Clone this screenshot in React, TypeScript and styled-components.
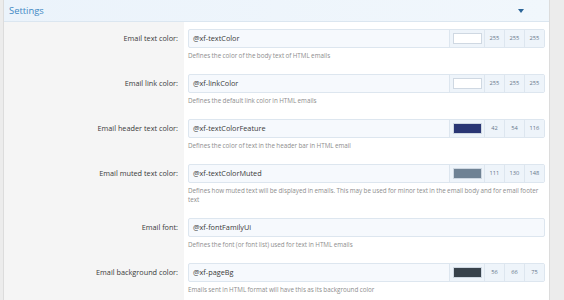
import * as React from "react";
import styled, { createGlobalStyle } from "styled-components";

const GlobalStyle = createGlobalStyle`
  html, body {
    margin: 0;
    padding: 0;
    background: #ececec;
    font-family: "Open Sans", "Noto Sans", sans-serif;
  }
`;

const Page = styled.div`
  padding: 0 14px 0 3px;
  height: 300px;
  overflow: hidden;
`;

const Block = styled.div`
  background: #fff;
  border: 1px solid #dcdcdc;
  border-top: none;
  border-bottom: none;
  padding-bottom: 20px;
`;

const Header = styled.div`
  display: flex;
  align-items: center;
  justify-content: space-between;
  height: 21px;
  padding: 0 25px 0 5px;
  background: linear-gradient(to right, #ebf3fb, #f1f7fc);
  border-bottom: 1px solid #dbe6f0;
  color: #4289c4;
  font-size: 9.4px;
`;

const Caret = styled.span`
  width: 0;
  height: 0;
  border-left: 3px solid transparent;
  border-right: 3px solid transparent;
  border-top: 4px solid #2c6598;
`;

const Row = styled.div`
  display: grid;
  grid-template-columns: 180px 1fr;
`;

const Label = styled.div`
  background: #f5f5f5;
  padding: 7px 6px 7px 0;
  text-align: right;
  font-size: 7.3px;
  line-height: 19px;
  color: #3a3a3a;
`;

const Field = styled.div`
  padding: 7px 4px 7px 4px;
`;

const InputBox = styled.div`
  display: flex;
  align-items: stretch;
  height: 17px;
  border: 1px solid #dde6ef;
  border-radius: 2px;
  background: #f6f9fd;
`;

const InputText = styled.div`
  flex: 1;
  padding-left: 4px;
  font-size: 7.3px;
  line-height: 17px;
  color: #3a3a3a;
`;

const Swatch = styled.div`
  display: flex;
  align-items: stretch;
  border-left: 1px solid #dde6ef;
  background: #eef4fa;
`;

const ColorBox = styled.div<{ $c: string }>`
  width: 27px;
  height: 9px;
  margin: 3px 2px 0 3px;
  border: 1px solid #cfd8e2;
  background: ${(p) => p.$c};
`;

const Num = styled.div`
  width: 19px;
  border-left: 1px solid #dde6ef;
  text-align: center;
  font-size: 5.7px;
  line-height: 17px;
  color: #66768a;
`;

const Explain = styled.div`
  margin-top: 3px;
  font-size: 6.3px;
  word-spacing: -0.3px;
  line-height: 9px;
  color: #8e8e8e;
`;

type Setting = {
  label: string;
  value: string;
  explain: string;
  rgb?: [number, number, number];
};

const settings: Setting[] = [
  {
    label: "Email text color:",
    value: "@xf-textColor",
    explain: "Defines the color of the body text of HTML emails",
    rgb: [255, 255, 255],
  },
  {
    label: "Email link color:",
    value: "@xf-linkColor",
    explain: "Defines the default link color in HTML emails",
    rgb: [255, 255, 255],
  },
  {
    label: "Email header text color:",
    value: "@xf-textColorFeature",
    explain: "Defines the color of text in the header bar in HTML email",
    rgb: [42, 54, 116],
  },
  {
    label: "Email muted text color:",
    value: "@xf-textColorMuted",
    explain:
      "Defines how muted text will be displayed in emails. This may be used for minor text in the email body and for email footer text",
    rgb: [111, 130, 148],
  },
  {
    label: "Email font:",
    value: "@xf-fontFamilyUi",
    explain: "Defines the font (or font list) used for text in HTML emails",
  },
  {
    label: "Email background color:",
    value: "@xf-pageBg",
    explain: "Emails sent in HTML format will have this as its background color",
    rgb: [56, 66, 75],
  },
];

export default function App() {
  return (
    <>
      <GlobalStyle />
      <Page>
        <Block>
          <Header>
            <span>Settings</span>
            <Caret />
          </Header>
          {settings.map((s) => (
            <Row key={s.label}>
              <Label>{s.label}</Label>
              <Field>
                <InputBox>
                  <InputText>{s.value}</InputText>
                  {s.rgb && (
                    <Swatch>
                      <ColorBox $c={`rgb(${s.rgb.join(",")})`} />
                      {s.rgb.map((n, i) => (
                        <Num key={i}>{n}</Num>
                      ))}
                    </Swatch>
                  )}
                </InputBox>
                <Explain>{s.explain}</Explain>
              </Field>
            </Row>
          ))}
        </Block>
      </Page>
    </>
  );
}
